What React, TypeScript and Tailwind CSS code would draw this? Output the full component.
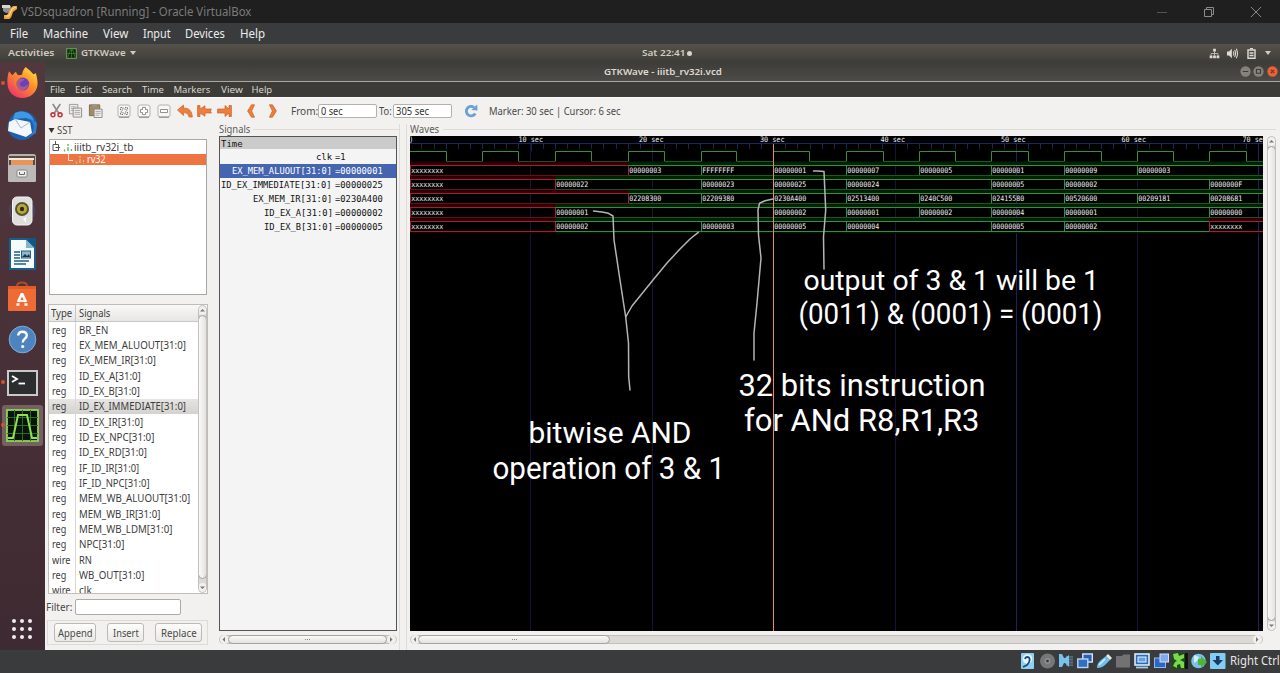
import { useLayoutEffect, useRef, useState } from "react";
import type { ReactNode } from "react";

/** One line of text stretched or squeezed to a fixed advance width. */
function T({ w, children, className = "" }: { w: number; children: string; className?: string }) {
  const ref = useRef<HTMLSpanElement>(null);
  const [scale, setScale] = useState(1);
  useLayoutEffect(() => {
    if (ref.current) setScale(w / ref.current.offsetWidth);
  }, [w, children]);
  return (
    <span className={`inline-block shrink-0 whitespace-pre ${className}`} style={{ width: w }}>
      <span ref={ref} className="inline-block origin-left" style={{ transform: `scaleX(${scale})` }}>
        {children}
      </span>
    </span>
  );
}

const vbMenu: [string, number, number][] = [
  ["File", 18, 15], ["Machine", 45, 15], ["View", 25, 15], ["Input", 28, 14], ["Devices", 40, 15], ["Help", 25, 0],
];
const gtkMenu: [string, number, number][] = [
  ["File", 15, 10], ["Edit", 17, 10], ["Search", 30, 10], ["Time", 22, 9.5], ["Markers", 37, 10], ["View", 22, 9], ["Help", 21, 0],
];

const signals: [string, string, number][] = [
  ["reg", "BR_EN", 29], ["reg", "EX_MEM_ALUOUT[31:0]", 107], ["reg", "EX_MEM_IR[31:0]", 77],
  ["reg", "ID_EX_A[31:0]", 62], ["reg", "ID_EX_B[31:0]", 61], ["reg", "ID_EX_IMMEDIATE[31:0]", 107],
  ["reg", "ID_EX_IR[31:0]", 64], ["reg", "ID_EX_NPC[31:0]", 75], ["reg", "ID_EX_RD[31:0]", 68],
  ["reg", "IF_ID_IR[31:0]", 60], ["reg", "IF_ID_NPC[31:0]", 71], ["reg", "MEM_WB_ALUOUT[31:0]", 111],
  ["reg", "MEM_WB_IR[31:0]", 81], ["reg", "MEM_WB_LDM[31:0]", 93], ["reg", "NPC[31:0]", 45],
  ["wire", "RN", 13], ["reg", "WB_OUT[31:0]", 65], ["wire", "clk", 13],
];

const traces: [string, string][] = [
  ["clk", "=1"], ["EX_MEM_ALUOUT[31:0]", "=00000001"], ["ID_EX_IMMEDIATE[31:0]", "=00000025"],
  ["EX_MEM_IR[31:0]", "=0230A400"], ["ID_EX_A[31:0]", "=00000002"], ["ID_EX_B[31:0]", "=00000005"],
];

const X = "xxxxxxxx";
const buses: [number, string][][] = [
  [[410, X], [628, "00000003"], [701, "FFFFFFFF"], [773, "00000001"], [846, "00000007"], [919, "00000005"], [991, "00000001"], [1064, "00000009"], [1137, "00000003"]],
  [[410, X], [555, "00000022"], [701, "00000023"], [773, "00000025"], [846, "00000024"], [991, "00000005"], [1064, "00000002"], [1209, "0000000F"]],
  [[410, X], [628, "02208300"], [701, "02209380"], [773, "0230A400"], [846, "02513400"], [919, "0240C500"], [991, "02415580"], [1064, "00520600"], [1137, "00209181"], [1209, "00208681"]],
  [[410, X], [555, "00000001"], [773, "00000002"], [846, "00000001"], [919, "00000002"], [991, "00000004"], [1064, "00000001"], [1209, "00000000"]],
  [[410, X], [555, "00000002"], [701, "00000003"], [773, "00000005"], [846, "00000004"], [991, "00000005"], [1064, "00000002"], [1209, X]],
];
const clkEdges = [446.5, 482.5, 518.5, 555.5, 591.5, 628.5, 664.5, 701.5, 736.5, 773.5, 809.5, 846.5, 883.5, 919.5, 955.5, 991.5, 1028.5, 1064.5, 1101.5, 1137.5, 1173.5, 1209.5, 1246.5];
const clkPath = "M410 151.5" + clkEdges.map((x, i) => `H${x}V${i % 2 === 0 ? 161.5 : 151.5}`).join("") + "H1263";

const notes: [string, number, number, number, number][] = [
  ["output of 3 & 1 will be 1", 803.5, 290.3, 295.5, 28.5], ["(0011) & (0001) = (0001)", 798.5, 323.5, 304, 29],
  ["32 bits instruction", 738.5, 396, 247, 30.5], ["for ANd R8,R1,R3", 744, 431, 235.5, 30.5],
  ["bitwise AND", 528.5, 442.7, 163, 30], ["operation of 3 & 1", 492.5, 478.9, 232.5, 30.5],
];

function Waves() {
  return (
    <svg className="block h-[495px] w-[853px] bg-black" viewBox="410 136 853 495">
      {Array.from({ length: 71 }, (_, i) => (
        <path key={i} d={`M${Math.round(409.3 + i * 12.13) + 0.5} 143V${i % 10 ? 149 : 151}`} stroke="#1b2350" />
      ))}
      <path d="M410 143.5H1263" stroke="#1c2860" />
      {[530.5, 652.5, 895.5, 1016.5, 1137.5, 1258.5].map((x) => (
        <path key={x} d={`M${x} 144V631`} stroke={x === 1016.5 || x === 1258.5 ? "#20205c" : "#141438"} />
      ))}
      {[518.5, 639, 760, 880.5, 1001, 1121.5, 1242.5].map((x, i) => (
        <text key={x} x={x} y={142.3} textLength={24.5} lengthAdjust="spacingAndGlyphs" fontSize={7.5} fill="#f4f4f4" className="font-['DejaVu_Sans_Mono',monospace]">{`${i + 1}0 sec`}</text>
      ))}
      <text x={409} y={142.3} fontSize={7.5} fill="#e4e4e4" className="font-['DejaVu_Sans_Mono',monospace]">)</text>
      <path d={clkPath} fill="none" stroke="#33913c" />
      {buses.map((bus, r) => {
        const top = 165.5 + 14 * r;
        return bus.map(([x, v], i) => {
          const end = i + 1 < bus.length ? bus[i + 1][0] : 1264;
          const red = v === X;
          return (
            <g key={`${r}-${i}`}>
              <rect x={x} y={top - 4} width={end - x} height={4} fill={red ? "#280007" : "#022006"} />
              {r === 4 && <rect x={x} y={top + 10} width={end - x} height={2} fill={red ? "#180004" : "#021203"} />}
              <path d={`M${x} ${top}H${end}M${x} ${top + 10}H${end}`} stroke={red ? "#ad1c28" : "#33913c"} />
              <path d={`M${x + 0.5} ${top}V${top + 10}`} stroke={red || i === 1 ? "#ad1c28" : "#33913c"} />
            </g>
          );
        });
      })}
      <rect x={773} y={144} width={1} height={487} fill="#e58a6c" />
      {buses.map((bus, r) =>
        bus.map(([x, v]) => (
          <text key={`${r}-${x}`} x={x + 1.2} y={173.4 + 14 * r} textLength={32} lengthAdjust="spacingAndGlyphs" fontSize={7.5} fill="#f2f2f2" className="font-['DejaVu_Sans_Mono',monospace]">{v}</text>
        )),
      )}
      <g fill="none" stroke="#b4b4b4" strokeWidth={1.5} strokeLinejoin="round" strokeLinecap="round">
        <path d="M593.5 211L602 212L608.5 213.3L613 216L614 240L620 280L625.7 317L628.5 343L628.7 377L630 390" />
        <path d="M698.3 232.3L690 239L680 249L667 263L653 280L632 306L625.7 317" />
        <path d="M773 199L765 200.7L759.5 203.3L758 210L758.5 235L761 258L757 303L754 333V360" />
        <path d="M813.5 171H818L824 171.5L825.7 210L823.5 237L824 269" />
      </g>
      {notes.map(([s, x, y, w, size]) => (
        <text key={s} x={x} y={y} textLength={w} lengthAdjust="spacingAndGlyphs" fontSize={size} fill="#fff" className="font-[Roboto,sans-serif]">{s}</text>
      ))}
    </svg>
  );
}

function HScroll({ thumb }: { thumb: string }) {
  return (
    <div className="flex h-[9px] w-full items-center rounded-full border border-[#c2c0bc] bg-[#dcdad7]">
      <Arrow d="M5 2L2.5 4.5L5 7Z" />
      <div className={`flex h-[9px] items-center justify-center gap-[1px] rounded-full border border-[#a5a39f] bg-gradient-to-b from-[#fafafa] to-[#e4e2e0] ${thumb}`}>
        <i className="size-[1px] bg-[#888]" /><i className="size-[1px] bg-[#888]" /><i className="size-[1px] bg-[#888]" />
      </div>
      <div className="flex-1" />
      <Arrow d="M3 2L5.5 4.5L3 7Z" />
    </div>
  );
}

function VScroll({ thumb }: { thumb: string }) {
  return (
    <div className="flex h-full w-[9px] flex-col items-center overflow-hidden rounded-full border border-[#c2c0bc] bg-[#dcdad7]">
      <Arrow d="M2 5.5L4.5 3L7 5.5Z" />
      <div className={`w-[9px] rounded-full border border-[#a5a39f] bg-gradient-to-r from-[#fafafa] to-[#e4e2e0] ${thumb}`} />
      <div className="flex-1" />
      <Arrow d="M2 3.5L4.5 6L7 3.5Z" />
    </div>
  );
}

function Arrow({ d }: { d: string }) {
  return <svg className="h-[9px] w-[9px] shrink-0 rounded-full bg-[#f1f0ee]" viewBox="0 0 9 9"><path d={d} fill="#777" /></svg>;
}

function Ico({ className = "", box = "0 0 16 16", children }: { className?: string; box?: string; children: ReactNode }) {
  return <svg className={`shrink-0 ${className}`} viewBox={box}>{children}</svg>;
}

function Toolbar() {
  const orange = { fill: "#ee7f3b", stroke: "#c9602a", strokeWidth: 0.7, strokeLinejoin: "round" as const };
  return (
    <div className="flex h-[27px] w-full items-center border-t border-[#fbfbfa] pb-[1px] pl-[4px] text-[10px] text-[#4a4a48]">
      <Ico className="mr-[4px] size-[15px]">
        <path d="M4 1L10.4 11M12 1L5.6 11" stroke="#8d8d8d" strokeWidth="1.8" />
        <circle cx="4.2" cy="12.6" r="2.1" fill="none" stroke="#c43a41" strokeWidth="1.7" />
        <circle cx="11.8" cy="12.6" r="2.1" fill="none" stroke="#c43a41" strokeWidth="1.7" />
      </Ico>
      <Ico className="mr-[5px] size-[15px]">
        <path d="M1.5 1.5H10.5V11.5H1.5Z" fill="#eee" stroke="#999" /><path d="M3 4H9M3 6H9M3 8H6" stroke="#aaa" />
        <path d="M5.5 5.5H14.5V15H5.5Z" fill="#eee" stroke="#8a8a88" /><path d="M7 8H13M7 10H13M7 12H13" stroke="#aaa" />
      </Ico>
      <Ico className="mr-[14px] size-[15px]">
        <path d="M1.5 2H12.5V13.5H1.5Z" fill="#a58c66" stroke="#7c6b50" /><path d="M4.5 1H9.5V3.5H4.5Z" fill="#999" />
        <path d="M6.5 6.5H15V15.5H6.5Z" fill="#eee" stroke="#8a8a88" /><path d="M8 9H13.5M8 11H13.5M8 13H12" stroke="#aaa" />
      </Ico>
      {["fit", "in", "out"].map((k, i) => (
        <Ico key={k} className="mr-[6px] size-[14px]" box="0 0 14 14">
          <rect x="1" y="1" width="12" height="12" rx="2" fill="#f6f6f5" stroke="#b3b2af" />
          <path d="M2 13.2H12" stroke="#85847f" />
          {i === 0 && <path d="M3.5 3.5H6V6H3.5ZM8 3.5H10.5V6H8ZM3.5 8H6V10.5H3.5ZM8 8H10.5V10.5H8Z" fill="none" stroke="#777" strokeDasharray="1.5 1" />}
          {i === 1 && <path d="M5.5 3.5H8.5V5.5H10.5V8.5H8.5V10.5H5.5V8.5H3.5V5.5H5.5Z" fill="#fff" stroke="#777" strokeWidth=".8" />}
          {i === 2 && <path d="M3.5 5.5H10.5V8.5H3.5Z" fill="#fff" stroke="#777" strokeWidth=".8" />}
        </Ico>
      ))}
      <Ico className="mr-[4px] h-[14px] w-[16px]" box="0 0 16 14"><path d="M.5 6L6.5 1V4C12 4 15 7 15.3 13H12C11.5 10 10 8.8 6.5 8.6V11.5Z" {...orange} /></Ico>
      <Ico className="mr-[5px] h-[14px] w-[15px]" box="0 0 15 14"><path d="M.6 1.5H3V5L8 1.8V5H14.4L13.4 7L14.4 9H8V12.2L3 9V12.5H.6Z" {...orange} /></Ico>
      <Ico className="mr-[15px] h-[14px] w-[15px]" box="0 0 15 14"><path d="M14.4 1.5H12V5L8 1.5V5H.6V9H8V12.5L12 9V12.5H14.4Z" {...orange} /></Ico>
      <Ico className="mr-[14px] h-[14px] w-[8px]" box="0 0 8 14"><path d="M4.5 .8H7.6L4.6 7L7.6 13.2H4.5L.6 7Z" {...orange} /></Ico>
      <Ico className="mr-[14px] h-[14px] w-[8px]" box="0 0 8 14"><path d="M3.5 .8H.4L3.4 7L.4 13.2H3.5L7.4 7Z" {...orange} /></Ico>
      <T w={27}>From:</T>
      <div className="flex h-[14px] w-[59px] items-center rounded-[2px] border border-[#b4b1ac] bg-white pl-[2px] text-[#333]"><T w={22}>0 sec</T></div>
      <T w={13} className="ml-[2px]">To:</T>
      <div className="ml-[1px] flex h-[14px] w-[59px] items-center rounded-[2px] border border-[#b4b1ac] bg-white pl-[2px] text-[#333]"><T w={33}>305 sec</T></div>
      <Ico className="mr-[11px] ml-[12px] size-[14px]">
        <path d="M12.8 10.8A5.4 5.4 0 1 1 11.5 4" fill="none" stroke="#6c9fd4" strokeWidth="3.2" /><path d="M8.5 6.8L15.5 7.5L15 .5Z" fill="#6c9fd4" />
      </Ico>
      <T w={132}>Marker: 30 sec | Cursor: 6 sec</T>
    </div>
  );
}

function Dock() {
  const dot = <i className="absolute top-[19px] left-[1px] size-[4px] rounded-full bg-[#d4532c]" />;
  return (
    <div className="flex w-[45px] shrink-0 flex-col bg-gradient-to-b from-[#53373e] to-[#3e2a32]">
      <div className="relative flex h-[41px] items-center justify-center pr-[1px]">{dot}
        <Ico className="size-[33px]" box="0 0 32 32">
          <defs>
            <linearGradient id="fx" x1="1" y1="0" x2=".2" y2="1"><stop offset="0" stopColor="#fff04a" /><stop offset=".45" stopColor="#ff9129" /><stop offset="1" stopColor="#f0306a" /></linearGradient>
          </defs>
          <path d="M19 1C23 4 25 6 26.5 8L29 7C30 11 31 15 30.5 19C29 27 23 31 16 31C8 31 2 26 1.5 18C1 13 1.5 9 3 5L6 9L9.5 5.5L11.5 9L15.5 8.5C16 5.5 17 3 19 1Z" fill="url(#fx)" />
          <circle cx="16.2" cy="17.5" r="6.3" fill="#6a3fc4" /><path d="M7 12C11 10 14 13 18 12.5C17 15 14 15 13 17C13.5 21 19 21 22 17C21 25 11 26 8.5 19Z" fill="#ff8a2a" opacity=".4" />
        </Ico>
      </div>
      <div className="flex h-[43px] items-center justify-center pr-[1px]">
        <Ico className="size-[32px]" box="0 0 32 32">
          <path d="M9 4C17-1 28 4 30.5 12C32 22 26 31 16 31C8 31 1 25 1.5 17C2 12 5 7 9 4Z" fill="#1e5fae" /><path d="M9 4C17 0 26 4 28 12L20 9L7 10Z" fill="#3b9ae6" />
          <path d="M3 13L9 10L24 13L26 24L20 28L2 22Z" fill="#f3f6fa" /><path d="M9 10L15 19L24 13" fill="none" stroke="#a9b9cc" /><path d="M22 8C31 16 29 25 20 30L30 24L31 14Z" fill="#2a7fd1" />
        </Ico>
      </div>
      <div className="flex h-[43px] items-center justify-center pr-[1px]">
        <Ico className="size-[30px]" box="0 0 30 30">
          <rect x="1" y="1" width="28" height="28" rx="2.5" fill="#b5b3b0" /><rect x="2" y="3" width="26" height="9" fill="#5a4c40" /><path d="M4 7H26V12H4Z" fill="#e89658" /><path d="M2 5H27V7H2Z" fill="#f5e9df" />
          <rect x="1" y="12" width="28" height="17" rx="1.5" fill="#bcbab8" /><rect x="10" y="17" width="10" height="7" rx="1" fill="#eee" stroke="#888" /><path d="M12.5 19V21.5H17.5V19" stroke="#666" fill="none" />
        </Ico>
      </div>
      <div className="flex h-[43px] items-center justify-center pr-[1px]">
        <Ico className="size-[30px]" box="0 0 30 30">
          <path d="M4 9Q1.5 15 4 21M26 9Q28.5 15 26 21" stroke="#4c4a82" fill="none" strokeWidth="1.2" /><rect x="5.5" y="1" width="19.5" height="28" rx="4.5" fill="#dededc" stroke="#f5f5f4" />
          <circle cx="15" cy="13" r="7" fill="#57542c" /><circle cx="15" cy="13" r="5" fill="#b8a93a" /><circle cx="15" cy="13" r="2.2" fill="#2a2a20" /><path d="M16 23L19 21V27Z" fill="#fff" />
        </Ico>
      </div>
      <div className="flex h-[43px] items-center justify-center pr-[1px]">
        <Ico className="h-[32px] w-[27px]" box="0 0 27 32">
          <path d="M0 0H27V32H0Z" fill="#1b5d8a" /><path d="M2 2H17L25 10V30H2Z" fill="#f7fafb" /><path d="M17 2L25 10H17Z" fill="#7cb4d3" /><path d="M18 0H27V10Z" fill="#145680" />
          <path d="M5 14H11M5 17H11M5 20H11M5 23H20M5 26H17" stroke="#225e86" strokeWidth="1.5" /><rect x="12.5" y="13" width="9" height="7" fill="#8fb7d0" stroke="#225e86" /><path d="M13 19L16 16L18 18L20 16L21 19Z" fill="#234" />
        </Ico>
      </div>
      <div className="flex h-[43px] items-center justify-center pr-[1px]">
        <Ico className="h-[31px] w-[30px]" box="0 0 30 31">
          <path d="M10 8V5Q10 1.5 15 1.5T20 5V8" fill="none" stroke="#b24a26" strokeWidth="2" /><path d="M1 5H29V29Q29 30 28 30H2Q1 30 1 29Z" fill="#ee6b35" /><path d="M1 5H29V8H1Z" fill="#e05c2c" />
          <path d="M15 12.5L11 21M15 12.5L19 21" stroke="#fff" strokeWidth="2.6" fill="none" /><path d="M9.5 23.5H12.5M17.5 23.5H20.5" stroke="#fff" strokeWidth="2.4" /><path d="M11 20H19" stroke="#fff" strokeWidth="1.8" />
        </Ico>
      </div>
      <div className="flex h-[43px] items-center justify-center pr-[1px]">
        <Ico className="size-[29px]" box="0 0 29 29">
          <circle cx="14.5" cy="14.5" r="13.3" fill="#4d84bd" stroke="#84addb" /><path d="M10.2 10.5Q10.5 6.8 14.5 6.8T18.8 10.5C18.8 13.5 14.7 14 14.7 17.5" fill="none" stroke="#fff" strokeWidth="2.4" /><circle cx="14.7" cy="21.5" r="1.6" fill="#fff" />
        </Ico>
      </div>
      <div className="relative flex h-[43px] items-center justify-center pr-[1px]">{dot}
        <Ico className="h-[26px] w-[31px]" box="0 0 31 26"><rect x="1" y="1" width="29" height="24" fill="#2c2d2e" stroke="#c9c9c7" strokeWidth="2" /><path d="M5 6L10 9L5 12" fill="none" stroke="#fff" strokeWidth="1.8" /><path d="M11.5 13.5H18" stroke="#fff" strokeWidth="1.8" /></Ico>
      </div>
      <div className="relative flex h-[43px] items-center justify-center pr-[1px]">{dot}
        <div className="flex h-[41px] w-[41px] items-center justify-center rounded-[3px] bg-[#75615f]">
          <Ico className="size-[33px]" box="0 0 33 33"><rect x="1" y="1" width="31" height="31" fill="#081408" stroke="#8fd457" strokeWidth="1.8" /><path d="M8.5 1V32M16.5 1V32M24.5 1V32M1 8.5H32M1 16.5H32M1 24.5H32" stroke="#2c6c22" /><path d="M2 29H7L12 6H21L26 29H31" fill="none" stroke="#8fe04c" strokeWidth="2" /></Ico>
        </div>
      </div>
      <div className="flex-1" />
      <div className="mr-[1px] mb-[11px] grid grid-cols-3 gap-[4px] self-center">
        {Array.from({ length: 9 }, (_, i) => <i key={i} className="size-[4px] rounded-full bg-[#f2eef0]" />)}
      </div>
    </div>
  );
}

function LeftPanel() {
  return (
    <div className="flex w-[167px] shrink-0 flex-col">
      <div className="flex h-[12px] items-center pl-[2.5px] text-[10px] text-[#4a4a48]">
        <svg className="mr-[2.5px] h-[5px] w-[7px]" viewBox="0 0 6 5"><path d="M0 0H6L3 5Z" fill="#333" /></svg><T w={16}>SST</T>
      </div>
      <div className="mt-[3px] ml-[4px] h-[156px] w-[158px] border border-[#aaa7a2] bg-white text-[10px] leading-[13px]">
        <div className="flex h-[14px] items-center pl-[2px] text-[#3c3c3c]">
          <Ico className="mr-[3px] h-[12px] w-[8px]" box="0 0 8 12"><path d="M3.5 0V3M1 3.5H6.5V9.5H1ZM3.5 6.5H8" fill="none" stroke="#555" /></Ico>
          <Ico className="mr-[1px] h-[9px] w-[10px]" box="0 0 9 9"><path d="M4.5 1V7M1 8.5V6M4.5 6V8.5M8 6V8.5" stroke="#62ad62" strokeWidth="1.3" strokeDasharray="2 1" /></Ico>
          <T w={59}>iiitb_rv32i_tb</T>
        </div>
        <div className="flex h-[11px] items-center bg-[#ee7442] pl-[17px] text-white">
          <Ico className="mr-[2px] h-[11px] w-[6px]" box="0 0 6 11"><path d="M1.5 0V6.5H6" fill="none" stroke="#ffe6db" /></Ico>
          <Ico className="mr-[2px] h-[9px] w-[10px]" box="0 0 9 9"><path d="M4.5 1V7M1 8.5V5.5M4.5 6V8.5M8 5V8.5" stroke="#c3cc86" strokeWidth="1.4" strokeDasharray="2 1" /></Ico>
          <T w={19}>rv32</T>
        </div>
      </div>
      <div className="mt-[9px] ml-[3px] flex h-[290px] w-[160px] border border-[#bfbdb9] bg-white">
        <div className="flex w-[149px] flex-col overflow-hidden text-[10px] text-[#3c3c3c]">
          <div className="flex h-[17px] shrink-0 items-center border-b border-[#c9c7c3] bg-gradient-to-b from-[#f8f8f7] to-[#e8e6e4]">
            <div className="flex h-full w-[27px] items-center border-r border-[#c9c7c3] pl-[2px]"><T w={21}>Type</T></div>
            <div className="pl-[3px]"><T w={31}>Signals</T></div>
          </div>
          {signals.map(([type, name, w], i) => (
            <div key={name} className={`flex h-[15.33px] shrink-0 items-center ${i === 5 ? "bg-gradient-to-b from-[#e6e5e3] to-[#d4d2cf]" : ""}`}>
              <div className="flex h-full w-[27px] items-center border-r border-[#d9d8d5] pl-[2.5px]"><T w={type === "reg" ? 14.5 : 18.5}>{type}</T></div>
              <div className="flex h-full items-center pl-[3px]"><T w={w}>{name}</T></div>
            </div>
          ))}
        </div>
        <VScroll thumb="h-[264px]" />
      </div>
      <div className="mt-[5px] flex h-[16px] items-center pl-[1px] text-[10px] text-[#4a4a48]">
        <T w={26}>Filter:</T>
        <div className="ml-[3px] h-[16px] w-[106px] rounded-[2px] border border-[#aeaba6] bg-white" />
      </div>
      <div className="mt-[5px] ml-[2px] flex h-[25px] w-[161px] items-center border border-[#dddbd8] text-[10px] text-[#4a4a48]">
        <Btn w={35} box="ml-[6px] w-[42px]">Append</Btn>
        <Btn w={26} box="ml-[11px] w-[37px]">Insert</Btn>
        <Btn w={36} box="ml-[11px] w-[47px]">Replace</Btn>
      </div>
    </div>
  );
}

function Btn({ w, box, children }: { w: number; box: string; children: string }) {
  return <div className={`flex h-[19px] items-center justify-center rounded-[3px] border border-[#bdbab6] bg-gradient-to-b from-[#fcfcfb] to-[#ebe9e7] ${box}`}><T w={w}>{children}</T></div>;
}

function SignalsPanel() {
  return (
    <div className="ml-[4px] flex w-[184px] shrink-0 flex-col border-r border-[#dedcd9] pl-[3px]">
      <div className="flex h-[12px] items-center pb-[2px] text-[10px] text-[#5c5c5a]"><T w={31}>Signals</T><i className="ml-[3px] h-px flex-1 bg-[#dedcd9]" /></div>
      <div className="flex h-[495px] w-[178px] flex-col border border-[#555] bg-[#f4f4f4] font-['DejaVu_Sans_Mono',monospace] text-[9px] text-[#111]">
        <div className="flex h-[12px] items-center bg-[#cbcbcb] pt-[2px] pl-[1px]"><T w={22}>Time</T></div>
        <div className="h-[1px]" />
        {traces.map(([n, v], i) => (
          <div key={n} className={`flex h-[14px] items-center leading-[14px] ${i === 1 ? "bg-[#4565b0] text-white" : ""}`}>
            <div className="flex w-[112px] justify-end"><T w={n.length * 5.27}>{n}</T></div>
            <T w={v.length * 5.33} className="ml-[3px]">{v}</T>
          </div>
        ))}
      </div>
      <div className="mt-[4px] w-[178px]"><HScroll thumb="-ml-[1px] w-[161px]" /></div>
    </div>
  );
}

function StatusIcons() {
  const c = "mr-[3.1px] size-[16px]";
  return (
    <>
      <Ico className={c}><rect x="1" y="0" width="13" height="16" rx="1" fill="#8fd0f2" /><circle cx="7.5" cy="6" r="4.8" fill="#e6f6ff" /><path d="M5 6Q6 3 9 4.5Q11 8 7 12L3 14" stroke="#1b4b7c" strokeWidth="1.8" fill="none" /></Ico>
      <Ico className={c}><circle cx="8.5" cy="8" r="7.5" fill="#777" /><circle cx="8.5" cy="8" r="3" fill="#8e8e8e" /><circle cx="8.5" cy="8" r="1.3" fill="#333" /></Ico>
      <Ico className={c}><path d="M8 3H15V13H8Z" fill="#5b6b74" /><path d="M1 1H4L6 5H7L11 2V14L7 10H6L4 14H1Z" fill="#75c3ec" /><path d="M11 5H15M11 8H15M11 11H15" stroke="#394650" /></Ico>
      <Ico className={c}><rect x="5.8" y="1" width="9.5" height="8" fill="#2760b4" stroke="#d6e7fa" strokeWidth="1.4" /><rect x=".8" y="6" width="10" height="8.5" fill="#2f6fc4" stroke="#b6d6f6" strokeWidth="1.4" /></Ico>
      <Ico className={c}><path d="M1 15Q1 10 5 7L10 3L14 7L9 12Q6 15 1 15Z" fill="#6fc0ef" /><path d="M10 3L12 1L16 5L14 7Z" fill="#e4edf3" /><path d="M3 12L9 6" stroke="#d5efff" strokeWidth="1.5" /></Ico>
      <Ico className={c}><path d="M1 3H7L8 1.5H15V14.5H1Z" fill="#727272" /></Ico>
      <Ico className={c}><rect x="1" y="1" width="14" height="11" fill="#2b69bd" stroke="#d9edfb" strokeWidth="1.6" /><rect x="4" y="4" width="8" height="5" fill="#5fa2e2" stroke="#e9f4fc" /><path d="M2 14.5H14" stroke="#9ccff0" strokeWidth="1.8" /></Ico>
      <Ico className={c}><rect x="1.5" y="5" width="11" height="9.5" fill="#2c68c0" stroke="#8fb9ef" /><rect x="7" y="1" width="8.5" height="8" fill="#82a9eb" stroke="#d0e0ff" /></Ico>
      <Ico className={c}><path d="M12 0H16V16H12Z" fill="#101510" /><rect x="0" y="0" width="13" height="16" fill="#1e4c19" /><path d="M1 1L6 0L7 3L12 1V5L8 7L12 9V15L9 15L8 11L5 12V15L1 13L3 9L5 8L2 6Z" fill="#79d84c" /></Ico>
      <Ico className={c}><circle cx="7.5" cy="8" r="7.3" fill="#79c3e8" /><path d="M3 2L8 4L6 8L3 10Z" fill="#d2effa" /><path d="M7 6H10V3L16 9L10 15V12H7Z" fill="#4eb53a" /></Ico>
      <Ico className="size-[16px]"><rect x="0" y="0" width="15.5" height="16" rx="1" fill="#83cdf3" /><path d="M6 3H9.5V7H13L7.75 12.5L2.5 7H6Z" fill="#153d68" /></Ico>
    </>
  );
}

export default function App() {
  return (
    <div className="flex h-[673px] w-[1280px] flex-col overflow-hidden bg-[#3a3b3c] font-['Noto_Sans',sans-serif] leading-none">
      <div className="flex h-[23px] shrink-0 items-center bg-[#1f1f1f] pl-[2px] text-[12px] text-[#7b7b7b]">
        <Ico className="mr-[3px] size-[16px]"><path d="M1 2H9V8L4 9L1 7Z" fill="#8c8f94" /><path d="M0 1H8V4H0Z" fill="#d6d6d6" /><path d="M15 2V5L11 8C10 11 9 15 7 15H2L2 11H5C7 8 8 4 11 2Z" fill="#efa63a" /><path d="M14 3L10 5L7 12H4" stroke="#ffe0a4" fill="none" /></Ico>
        <T w={230.5}>VSDsquadron [Running] - Oracle VirtualBox</T>
        <div className="ml-auto flex items-center gap-[37px] pr-[19px]">
          <svg className="h-[10px] w-[10px]" viewBox="0 0 10 10"><path d="M0 5.5H10" stroke="#555" /></svg>
          <svg className="h-[10px] w-[10px]" viewBox="0 0 10 10"><path d="M.5 2.5H7.5V9.5H.5ZM2.5 2V.5H9.5V7.5H8" fill="none" stroke="#8c8c8c" /></svg>
          <svg className="h-[10px] w-[10px]" viewBox="0 0 10 10"><path d="M0 0L10 10M10 0L0 10" stroke="#8a8a8a" /></svg>
        </div>
      </div>
      <div className="flex h-[21px] shrink-0 items-center bg-[#3a3b3c] pl-[10px] text-[12px] text-[#ececec]">
        {vbMenu.map(([s, w, gap]) => <div key={s} className="flex" style={{ marginRight: gap }}><T w={w}>{s}</T></div>)}
      </div>
      <div className="flex h-[18px] shrink-0 items-center bg-gradient-to-b from-[#54524a] to-[#3f3d38] text-[9.5px] font-semibold text-[#d0ccc3]">
        <div className="flex w-[640px] items-center pl-[8px]">
          <T w={46}>Activities</T>
          <Ico className="mr-[4px] ml-[12px] size-[11px]"><rect x="1" y="1" width="14" height="14" fill="#0d280c" stroke="#6fa359" strokeWidth="1.5" /><path d="M3 13L6 3H10L13 13M8 2V14M2 8H14" stroke="#3d8f35" fill="none" /></Ico>
          <T w={45}>GTKWave</T>
          <svg className="ml-[4px] h-[4px] w-[6px]" viewBox="0 0 6 4"><path d="M0 0H6L3 4Z" fill="#cfcbc2" /></svg>
        </div>
        <T w={43} className="ml-[2px]">Sat 22:41</T><i className="ml-[2px] size-[5px] rounded-full bg-[#d8d4cb]" />
        <div className="ml-auto flex items-center pr-[9px]">
          <Ico className="mr-[7px] size-[11px]"><path d="M6 1H10V5H6ZM1 11H5V15H1ZM6 11H10V15H6ZM11 11H15V15H11Z" fill="#dfdcd5" /><path d="M8 5V11M3 11V8H13V11" stroke="#dfdcd5" fill="none" /></Ico>
          <Ico className="mr-[9px] size-[11px]"><path d="M0 5H3L7 1V15L3 11H0Z" fill="#dfdcd5" /><path d="M9 5Q11 8 9 11M11 3Q14 8 11 13M13.5 1Q17 8 13.5 15" stroke="#dfdcd5" strokeWidth="1.5" fill="none" /></Ico>
          <Ico className="mr-[9px] h-[11px] w-[9px]" box="0 0 9 11"><path d="M1 2H8V10.2H1Z" fill="none" stroke="#dfdcd5" strokeWidth="1.4" /><path d="M3 .7H6M2.5 5H6.5M2.5 7.5H6.5" stroke="#dfdcd5" strokeWidth="1.3" /></Ico>
          <svg className="h-[4px] w-[6px]" viewBox="0 0 6 4"><path d="M0 0H6L3 4Z" fill="#cfcbc2" /></svg>
        </div>
      </div>
      <div className="flex h-[588px] shrink-0">
        <Dock />
        <div className="flex min-w-0 flex-1 flex-col bg-[#f2f1f0]">
          <div className="flex h-[20px] shrink-0 items-center border-b border-[#aaa8a3] bg-gradient-to-b from-[#3e3c38] to-[#4d4b47] text-[9.5px] font-semibold text-[#dedad1]">
            <T w={118} className="ml-[558.5px]">GTKWave - iiitb_rv32i.vcd</T>
            <div className="ml-auto flex gap-[2.5px] pr-[2.5px]">
              <Ico className="size-[11px]"><circle cx="8" cy="8" r="7.5" fill="#85827c" /><path d="M4 8H12" stroke="#3c3b37" strokeWidth="1.5" /></Ico>
              <Ico className="size-[11px]"><circle cx="8" cy="8" r="7.5" fill="#85827c" /><rect x="5" y="5" width="6" height="5.5" fill="none" stroke="#3c3b37" strokeWidth="1.5" /></Ico>
              <Ico className="size-[11px]"><circle cx="8" cy="8" r="7.5" fill="#ea6338" /><path d="M5.5 5.5L10.5 10.5M10.5 5.5L5.5 10.5" stroke="#7b2c14" strokeWidth="1.6" /></Ico>
            </div>
          </div>
          <div className="flex h-[15px] shrink-0 items-center bg-[#3c3b37] pl-[5px] text-[9.5px] text-[#dad6cc]">
            {gtkMenu.map(([s, w, gap]) => <div key={s} className="flex" style={{ marginRight: gap }}><T w={w}>{s}</T></div>)}
          </div>
          <Toolbar />
          <div className="flex min-h-0 flex-1">
            <LeftPanel />
            <SignalsPanel />
            <div className="ml-[6px] flex w-[870px] flex-col border-l border-[#dedcd9] pl-[3px]">
              <div className="flex h-[12px] items-center pb-[2px] text-[10px] text-[#5c5c5a]"><T w={29}>Waves</T><i className="ml-[4px] h-px flex-1 bg-[#dedcd9]" /></div>
              <div className="flex h-[495px] gap-[4px]"><Waves /><VScroll thumb="h-[475px]" /></div>
              <div className="mt-[4px] w-[853px]"><HScroll thumb="-ml-[2px] w-[192px]" /></div>
            </div>
          </div>
        </div>
      </div>
      <div className="flex h-[23px] shrink-0 items-center pb-[2px] pl-[1019.5px] text-[12px] text-[#e6e6e6]">
        <StatusIcons />
        <T w={50} className="ml-[3.5px]">Right Ctrl</T>
      </div>
    </div>
  );
}
